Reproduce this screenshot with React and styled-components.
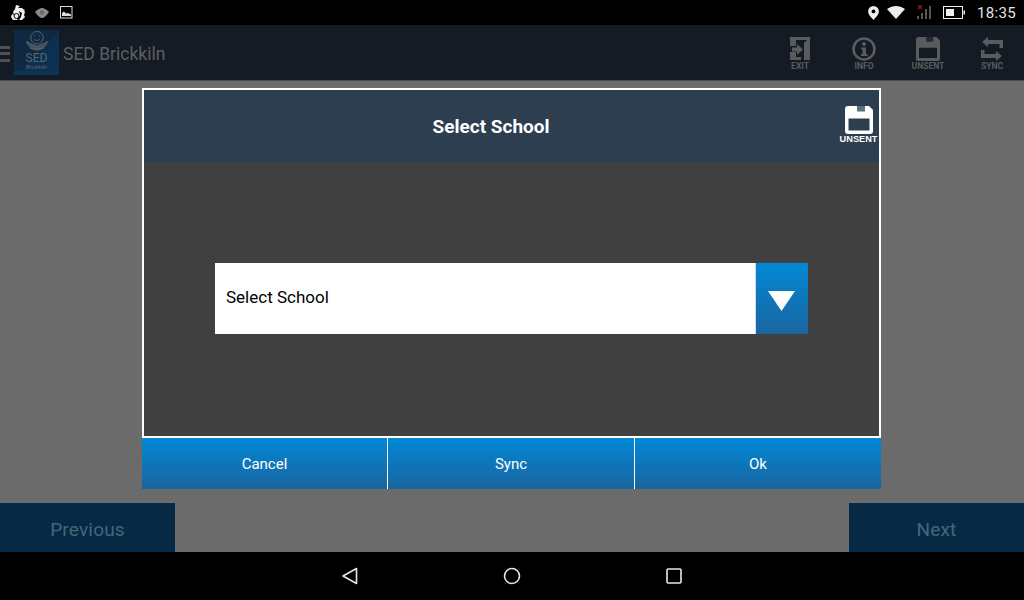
import React from "react";
import styled, { createGlobalStyle } from "styled-components";

const Global = createGlobalStyle`
  html, body { margin: 0; padding: 0; width: 1024px; height: 600px; overflow: hidden; background: #000; }
  * { box-sizing: border-box; }
`;
const Page = styled.div`
  position: relative; width: 1024px; height: 600px; display: flex; flex-direction: column;
  font-family: Roboto, "Liberation Sans", sans-serif; background: #6b6b6b;
`;
const StatusBar = styled.div`
  height: 25px; background: #000; display: flex; align-items: center; padding: 0 8px 0 11px; color: #e8e8e8;
`;
const StatusLeft = styled.div`display: flex; align-items: center; flex: 1;`;
const StatusRight = styled.div`display: flex; align-items: center;`;
const Clock = styled.span`font-size: 15px; letter-spacing: .35px; margin-left: 12px; color: #e4e4e4; margin-top: 1px;`;
const Slot = styled.span`display: inline-flex; margin-left: ${p => p.$ml || 0}px;`;
const AppBar = styled.div`
  height: 56px; background: #141b24; display: flex; align-items: center; border-bottom: 1px solid #4a4c4e;
`;
const Burger = styled.div`
  width: 10px; height: 16px; margin-top: 2px; display: flex; flex-direction: column; justify-content: space-between;
  span { display: block; height: 3px; background: #4f5052; }
`;
const Logo = styled.div`
  width: 45px; height: 45px; margin-left: 4px; background: linear-gradient(135deg, #0f2a40 0 55%, #0c3150 55% 100%);
  display: flex; flex-direction: column; align-items: center; position: relative; overflow: hidden;
  border-bottom: 4px solid #0c3554;
`;
const LogoBig = styled.span`font-size: 12px; line-height: 11px; margin-top: -1px; color: #5e656b;`;
const LogoSmall = styled.span`font-size: 5.5px; line-height: 7px; color: #5e656b;`;
const Brand = styled.span`font-size: 17.5px; color: #5d5f61; margin-left: 4px; margin-top: 2px;`;
const Actions = styled.div`margin-left: auto; display: flex;`;
const Action = styled.div`
  width: 64px; display: flex; flex-direction: column; align-items: center; color: #5a5b5c; gap: 1px;
  font-size: 8.5px; font-weight: 700; line-height: 9px; height: 38px; justify-content: flex-end; margin-top: -2px;
`;
const Body = styled.div`flex: 1; display: flex; align-items: flex-end; justify-content: space-between;`;
const NavButton = styled.div`
  width: 175px; height: 49px; background: #062a45; color: #47667a; font-size: 19px; padding-top: 3px;
  display: flex; align-items: center; justify-content: center; letter-spacing: .2px;
`;
const SystemNav = styled.div`
  height: 48px; background: #000; display: flex; align-items: center; justify-content: center;
`;
const SysSlot = styled.span`width: 162px; display: flex; justify-content: center;`;
const Dialog = styled.div`
  position: absolute; left: 142px; top: 88px; width: 739px; display: flex; flex-direction: column;
`;
const DialogFrame = styled.div`
  height: 350px; border: 2px solid #fff; background: #404040; display: flex; flex-direction: column;
`;
const DialogHeader = styled.div`
  height: 72px; background: #2c3e50; display: flex; align-items: stretch; color: #fff;
`;
const Title = styled.div`
  flex: 1; font-size: 19px; font-weight: 700; display: flex; align-items: center; justify-content: center;
`;
const Unsent = styled.div`
  width: 41px; display: flex; flex-direction: column; align-items: center; padding-top: 16px;
  font-size: 9.2px; font-weight: 700; line-height: 10px; font-family: "Liberation Sans", sans-serif;
`;
const DialogBody = styled.div`
  flex: 1; display: flex; align-items: center; padding: 0 71px 2px;
`;
const Select = styled.div`
  width: 593px; height: 71px; background: #fff; display: flex; align-items: stretch;
`;
const SelectText = styled.div`
  flex: 1; color: #000; font-size: 17px; display: flex; align-items: center; padding: 0 0 2px 11px; border-right: 1px solid #cfe0ec;
`;
const SelectArrow = styled.div`
  width: 52px; padding: 6px 2px 0 0; background: linear-gradient(#0288d6, #1a659f); display: flex; align-items: center; justify-content: center;
`;
const Footer = styled.div`display: grid; grid-template-columns: 245px 247px 247px; height: 51px;`;
const FooterButton = styled.div`
  background: linear-gradient(#0288d6, #1a659f); color: #fff; font-size: 15px; padding-top: 1px;
  display: flex; align-items: center; justify-content: center;
  & + & { border-left: 1px solid #fff; }
`;

const Floppy = ({ size, color, cut }) => (
  <svg width={size} height={size} viewBox="0 0 28 28">
    <path fill={color} d="M3 0H24L28 4V25a3 3 0 0 1-3 3H3a3 3 0 0 1-3-3V3a3 3 0 0 1 3-3Z" />
    <rect x="12" y="0" width="8" height="5.500" fill={cut} opacity=".75" />
    <rect x="3.500" y="12.500" width="21" height="12" fill={cut} />
  </svg>
);

export default function App() {
  return (
    <Page>
      <Global />
      <StatusBar>
        <StatusLeft>
          <svg width="15" height="16" viewBox="0 0 15 16">
            <path fill="#eee" d="M5 0 9 1 7 3 11 3 14 7 13 10 14 12 11 15H8L10 12 11 8 8 6 9 10 6 15H2L0 12 1 9 3 10 2 7 4 4Z" />
            <circle cx="5.500" cy="11" r="2.500" fill="none" stroke="#000" strokeWidth="1" />
            <path fill="#eee" d="M10 3 14 5 13 6Z" />
          </svg>
          <svg width="14" height="10" viewBox="0 0 14 10" style={{ marginLeft: 9 }}>
            <path fill="#8a8a8a" d="M0 4C3 1 5 0 7 0s4 1 7 4c-3 4-5 6-7 6S3 8 0 4Z" />
            <circle cx="7" cy="4.500" r="2.200" fill="#6a6a6a" />
          </svg>
          <svg width="13" height="13" viewBox="0 0 13 13" style={{ marginLeft: 11 }}>
            <rect x=".5" y=".5" width="11.500" height="11.500" fill="none" stroke="#ddd" />
            <path fill="#ddd" d="M2 10V7L4 5.500 6 7.500 8 7 11 8.500V10Z" />
          </svg>
        </StatusLeft>
        <StatusRight>
          <svg width="11" height="14" viewBox="0 0 10 13">
            <path fill="#eee" d="M5 0a5 5 0 0 1 5 5c0 3-3 5.500-5 8-2-2.500-5-5-5-8a5 5 0 0 1 5-5Z" />
            <circle cx="5" cy="5" r="1.800" fill="#000" />
          </svg>
          <Slot $ml={8}>
            <svg width="18" height="13" viewBox="0 0 18 13"><path fill="#eee" d="M0 3C3 1 6 0 9 0s6 1 9 3L9 13Z" /></svg>
          </Slot>
          <Slot $ml={12}>
            <svg width="15" height="15" viewBox="0 0 15 15">
              <rect x="0" y="11" width="2" height="3" fill="#555" />
              <rect x="4" y="8" width="2" height="6" fill="#555" />
              <rect x="8" y="4" width="2" height="10" fill="#555" />
              <rect x="12" y="1" width="2" height="13" fill="#555" />
              <path d="M1 0 5 4M5 0 1 4" stroke="#a01818" strokeWidth="1.100" />
            </svg>
          </Slot>
          <Slot $ml={11}>
            <svg width="22" height="13" viewBox="0 0 22 13">
              <rect x=".5" y=".5" width="19" height="12" fill="none" stroke="#eee" />
              <rect x="3" y="3" width="8" height="7" fill="#eee" />
              <rect x="20.500" y="4.500" width="1.500" height="4" fill="#eee" />
            </svg>
          </Slot>
          <Clock>18:35</Clock>
        </StatusRight>
      </StatusBar>
      <AppBar>
        <Burger><span /><span /><span /></Burger>
        <Logo>
          <svg width="26" height="24" viewBox="0 0 26 24" style={{ marginTop: 1 }}>
            <circle cx="13" cy="7" r="6.500" fill="none" stroke="#56636d" />
            <path d="M10 5h1M15 5h1M10 9c2 1 4 1 6 0" stroke="#56636d" fill="none" />
            <path d="M2 11c2 6 7 9 11 9s9-3 11-9l-4 2-7 3-7-3Z" fill="#44525c" stroke="#56636d" />
            <path d="M6 18h14" stroke="#56636d" />
          </svg>
          <LogoBig>SED</LogoBig>
          <LogoSmall>Brickkiln</LogoSmall>
        </Logo>
        <Brand>SED Brickkiln</Brand>
        <Actions>
          <Action>
            <svg width="20" height="24" viewBox="0 0 20 24">
              <path fill="#5a5b5c" d="M0 0H20V23H14V6L17 3H6V9H0ZM0 15H6V20H11V23H0Z" />
              <path fill="#5a5b5c" d="M2 10.500H7V7L13 12.500 7 18V14.500H2Z" />
            </svg>
            EXIT
          </Action>
          <Action>
            <svg width="24" height="24" viewBox="0 0 24 24">
              <circle cx="12" cy="12" r="10.500" fill="none" stroke="#5a5b5c" strokeWidth="2.600" />
              <circle cx="12" cy="7" r="2" fill="#5a5b5c" />
              <path fill="#5a5b5c" d="M9 10.500h5V17h1.500v2h-6.500v-2H10.500v-4.500H9Z" />
            </svg>
            INFO
          </Action>
          <Action>
            <Floppy size={24} color="#5a5b5c" cut="#141b24" />
            UNSENT
          </Action>
          <Action>
            <svg width="24" height="24" viewBox="0 0 24 24">
              <path fill="#5a5b5c" d="M8 0V3H23V11H19.500V7H8V10L2 5ZM16 24V21H1V13H4.500V17H16V14L22 19Z" />
            </svg>
            SYNC
          </Action>
        </Actions>
      </AppBar>
      <Body>
        <NavButton>Previous</NavButton>
        <NavButton>Next</NavButton>
      </Body>
      <SystemNav>
        <SysSlot>
          <svg width="18" height="18" viewBox="0 0 18 18"><path d="M15.500 1.500V16.500L2 9Z" fill="none" stroke="#e6e6e6" strokeWidth="1.600" strokeLinejoin="round" /></svg>
        </SysSlot>
        <SysSlot>
          <svg width="18" height="18" viewBox="0 0 18 18"><circle cx="9" cy="9" r="7.500" fill="none" stroke="#e6e6e6" strokeWidth="1.600" /></svg>
        </SysSlot>
        <SysSlot>
          <svg width="16" height="16" viewBox="0 0 16 16"><rect x="1" y="1" width="14" height="14" rx="1" fill="none" stroke="#e6e6e6" strokeWidth="1.600" /></svg>
        </SysSlot>
      </SystemNav>
      <Dialog>
        <DialogFrame>
          <DialogHeader>
            <Title>Select School</Title>
            <Unsent>
              <Floppy size={28} color="#fff" cut="#2c3e50" />
              UNSENT
            </Unsent>
          </DialogHeader>
          <DialogBody>
            <Select>
              <SelectText>Select School</SelectText>
              <SelectArrow>
                <svg width="27" height="20" viewBox="0 0 27 20"><path fill="#fff" d="M0 0H27L13.500 20Z" /></svg>
              </SelectArrow>
            </Select>
          </DialogBody>
        </DialogFrame>
        <Footer>
          <FooterButton>Cancel</FooterButton>
          <FooterButton>Sync</FooterButton>
          <FooterButton>Ok</FooterButton>
        </Footer>
      </Dialog>
    </Page>
  );
}
